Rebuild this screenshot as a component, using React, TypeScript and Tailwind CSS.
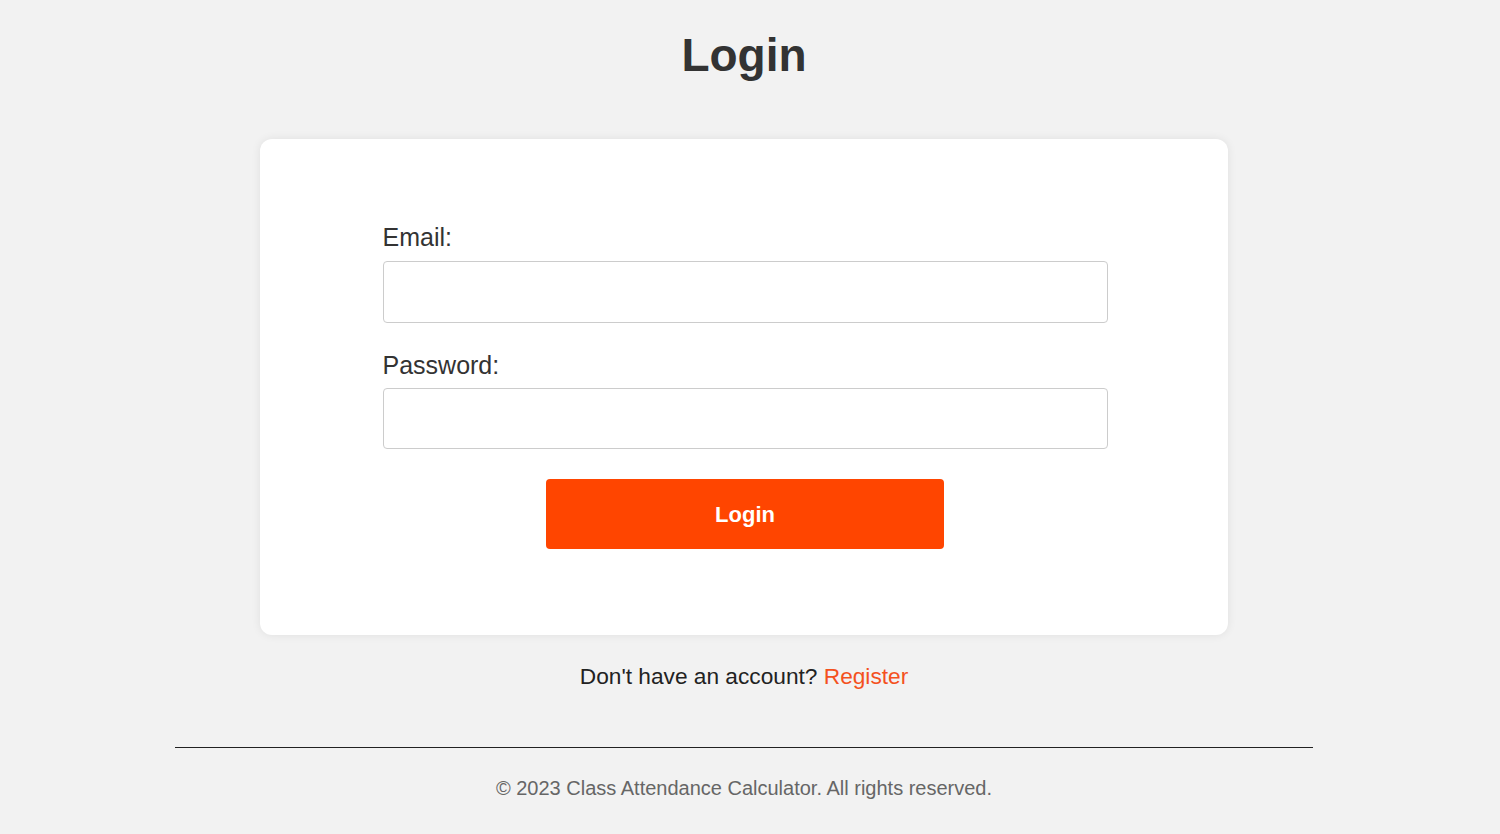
export default function App() {
  return (
    <div className="min-h-screen bg-[#f2f2f2] pr-3 flex flex-col items-center font-['Liberation_Sans',Arial,sans-serif]">
      <h1 className="mt-[29px] text-[46px] leading-[52px] font-bold text-[#333]">Login</h1>

      {/* card */}
      <div className="mt-[58px] w-[968px] bg-white rounded-xl shadow-[0_0_10px_rgba(0,0,0,0.08)] pt-[83px] pb-[86px] flex flex-col items-center">
        <form className="w-[725px] ml-[2px] flex flex-col" onSubmit={(e) => e.preventDefault()}>
          <label htmlFor="email" className="text-[25px] leading-[30px] text-[#333]">Email:</label>
          <input
            id="email"
            type="email"
            className="mt-[9px] h-[62px] w-full rounded border border-[#ccc] bg-white px-3 outline-none"
          />
          <label htmlFor="password" className="mt-[27px] text-[25px] leading-[30px] text-[#333]">Password:</label>
          <input
            id="password"
            type="password"
            className="mt-[8px] h-[61px] w-full rounded border border-[#ccc] bg-white px-3 outline-none"
          />
          <button
            type="submit"
            className="mt-[30px] self-center w-[398px] h-[70px] rounded bg-[#ff4500] text-white text-[22px] font-bold"
          >
            Login
          </button>
        </form>
      </div>

      <p className="mt-[27px] text-[22.7px] leading-[28px] text-[#222]">
        Don't have an account? <a href="#" className="text-[#f4511e]">Register</a>
      </p>

      <footer className="mt-[57px] w-[1138px] flex flex-col items-center">
        <hr className="w-full border-t-[1.5px] border-[#222]" />
        <p className="mt-[28px] text-[20px] leading-[24px] text-[#666]">
          © 2023 Class Attendance Calculator. All rights reserved.
        </p>
      </footer>
    </div>
  )
}
